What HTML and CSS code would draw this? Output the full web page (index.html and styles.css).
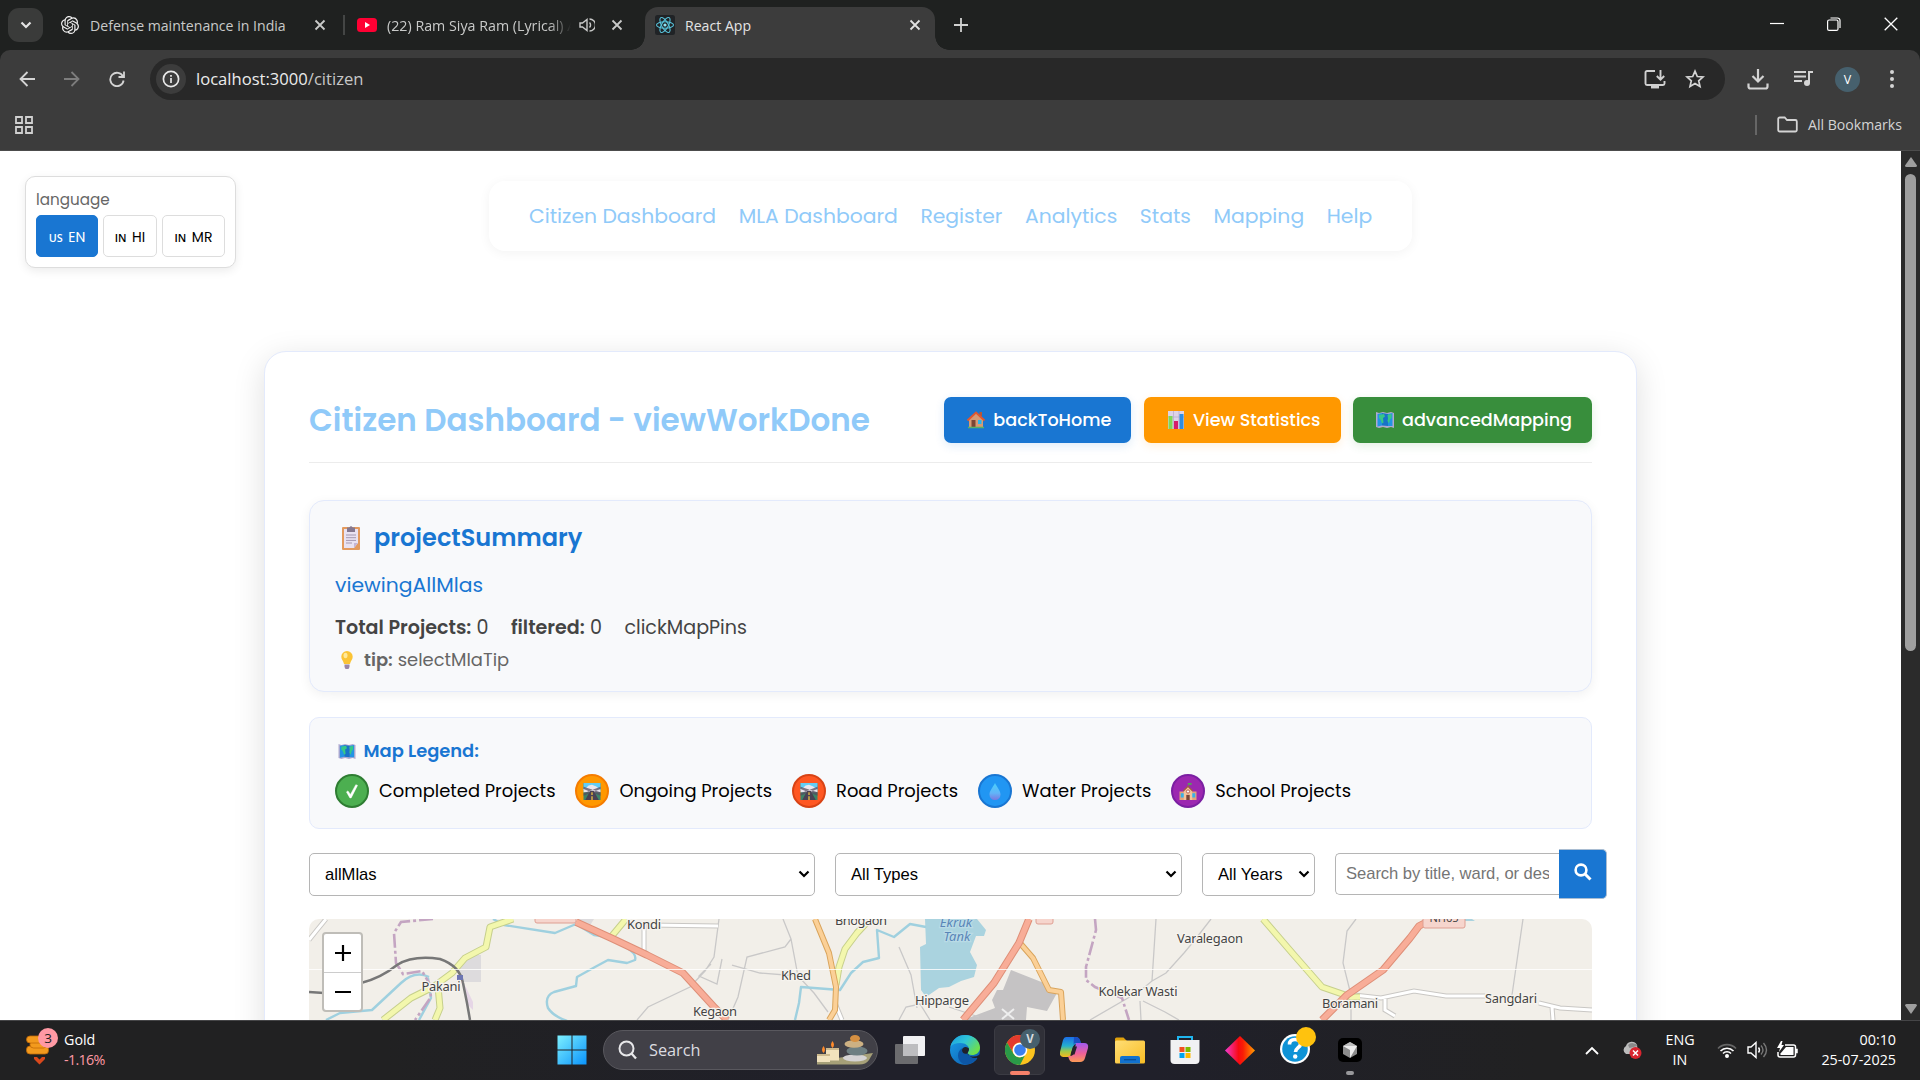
FILE: index.html
```
<!DOCTYPE html>
<html lang="en">
<head>
<meta charset="utf-8">
<title>React App</title>
<link rel="stylesheet" href="styles.css">
</head>
<body>
<svg class="defs" aria-hidden="true">
  <defs>
    <linearGradient id="g-win" x1="0" y1="0" x2="1" y2="1"><stop offset="0" stop-color="#7df0ff"/><stop offset="1" stop-color="#0a93fb"/></linearGradient>
    <linearGradient id="g-edge" x1="0" y1="0" x2="1" y2=".6"><stop offset="0" stop-color="#1a9be0"/><stop offset=".5" stop-color="#2fc5d8"/><stop offset="1" stop-color="#6fe04a"/></linearGradient>
    <linearGradient id="g-edge2" x1="0" y1="0" x2="1" y2="1"><stop offset="0" stop-color="#1aa0ea"/><stop offset="1" stop-color="#0c56a8"/></linearGradient>
    <linearGradient id="g-cop1" x1="0" y1="0" x2="0" y2="1"><stop offset="0" stop-color="#1b6de8"/><stop offset=".45" stop-color="#25b0cf"/><stop offset=".7" stop-color="#9bc94b"/><stop offset="1" stop-color="#f5b81e"/></linearGradient>
    <linearGradient id="g-cop2" x1="0" y1="0" x2="0" y2="1"><stop offset="0" stop-color="#a05af0"/><stop offset=".55" stop-color="#ee6099"/><stop offset="1" stop-color="#fb9a56"/></linearGradient>
    <linearGradient id="g-fold" x1="0" y1="0" x2="1" y2="1"><stop offset="0" stop-color="#ffde76"/><stop offset="1" stop-color="#f9bd24"/></linearGradient>
    <linearGradient id="g-dia"><stop offset="0" stop-color="#f23ad2"/><stop offset=".45" stop-color="#f80a12"/><stop offset=".6" stop-color="#fa1d05"/><stop offset="1" stop-color="#ff9d00"/></linearGradient>
    <linearGradient id="g-drop" x1="0" y1="0" x2="0" y2="1"><stop offset="0" stop-color="#4ad0fb"/><stop offset=".6" stop-color="#62b4f8"/><stop offset="1" stop-color="#7a78e0"/></linearGradient>
    <symbol id="i-close" viewBox="0 0 12 12"><path d="M1.500 1.500l9 9M10.500 1.500l-9 9" stroke="currentColor" stroke-width="1.800" fill="none"/></symbol>
    <symbol id="i-chev" viewBox="0 0 12 12"><path d="M1.500 3.500L6 8l4.500-4.500" stroke="currentColor" stroke-width="2.200" fill="none"/></symbol>
    <symbol id="i-map" viewBox="0 0 20 18"><path d="M1 1l3 1 4-1 4 1 4-1 3 1v15l-3-1-4 1-4-1-4 1-3-1z" fill="#b0a9d0"/><path d="M2.500 3L7 2v12.500l-4.500 1zM13 3l4.500-1v13L13 15z" fill="#2294e4"/><path d="M7 2l6 1v12l-6-.5z" fill="#1873c8"/><path d="M4 4l5-1 1 2.500-2 1.500.5 4.500-1.500 1-1.500-4L4 7zM12.500 4l4-1v4l-1.500 1.500-1 4-1.500-2.500.5-2.500z" fill="#37c887"/></symbol>
    <symbol id="i-road" viewBox="0 0 20 20"><path d="M0 0h20v20H0z" fill="#3c8367"/><path d="M0 0h20v8H0z" fill="#62cdf6"/><path d="M0 7l3-1 3-3 4-1 5 2 5 4v3H0z" fill="#e9e6ee"/><path d="M8 9h4l6 11H2z" fill="#4a4153"/><path d="M0 7l20 8v-4L0 4.500zM20 7L0 15v-3l20-7.500z" fill="#554c60" fill-opacity=".75"/><path d="M8.500 10h3L17 20H3z" fill="#4a4153"/><path d="M10 11v3M10 15.500V20" stroke="#f2c33c" stroke-width="1.500"/></symbol>
  </defs>
</svg>

<div class="browser">
  <header class="tabstrip">
    <span class="tab-search"><svg width="12" height="12"><use href="#i-chev"/></svg></span>
    <div class="tab tab-first">
      <svg class="fav" viewBox="0 0 24 24" fill="#f0f0f0"><path d="M22.2819 9.8211a5.9847 5.9847 0 0 0-.5157-4.9108 6.0462 6.0462 0 0 0-6.5098-2.9A6.0651 6.0651 0 0 0 4.9807 4.1818a5.9847 5.9847 0 0 0-3.9977 2.9 6.0462 6.0462 0 0 0 .7427 7.0966 5.98 5.98 0 0 0 .511 4.9107 6.051 6.051 0 0 0 6.5146 2.9001A5.9847 5.9847 0 0 0 13.2599 24a6.0557 6.0557 0 0 0 5.7718-4.2058 5.9894 5.9894 0 0 0 3.9977-2.9001 6.0557 6.0557 0 0 0-.7475-7.0729zm-9.022 12.6081a4.4755 4.4755 0 0 1-2.8764-1.0408l.1419-.0804 4.7783-2.7582a.7948.7948 0 0 0 .3927-.6813v-6.7369l2.02 1.1686a.071.071 0 0 1 .038.052v5.5826a4.504 4.504 0 0 1-4.4945 4.4944zm-9.6607-4.1254a4.4708 4.4708 0 0 1-.5346-3.0137l.142.0852 4.783 2.7582a.7712.7712 0 0 0 .7806 0l5.8428-3.3685v2.3324a.0804.0804 0 0 1-.0332.0615L9.74 19.9502a4.4992 4.4992 0 0 1-6.1408-1.6464zM2.3408 7.8956a4.485 4.485 0 0 1 2.3655-1.9728V11.6a.7664.7664 0 0 0 .3879.6765l5.8144 3.3543-2.0201 1.1685a.0757.0757 0 0 1-.071 0l-4.8303-2.7865A4.504 4.504 0 0 1 2.3408 7.872zm16.5963 3.8558L13.1038 8.364 15.1192 7.2a.0757.0757 0 0 1 .071 0l4.8303 2.7913a4.4944 4.4944 0 0 1-.6765 8.1042v-5.6772a.79.79 0 0 0-.407-.667zm2.0107-3.0231l-.142-.0852-4.7735-2.7818a.7759.7759 0 0 0-.7854 0L9.409 9.2297V6.8974a.0662.0662 0 0 1 .0284-.0615l4.8303-2.7866a4.4992 4.4992 0 0 1 6.6802 4.66zM8.3065 12.863l-2.02-1.1638a.0804.0804 0 0 1-.038-.0567V6.0742a4.4992 4.4992 0 0 1 7.3757-3.4537l-.142.0805L8.704 5.459a.7948.7948 0 0 0-.3927.6813zm1.0976-2.3654l2.602-1.4998 2.6069 1.4998v2.9994l-2.5974 1.4997-2.6067-1.4997Z"/></svg>
      <span class="tab-title">Defense maintenance in India</span>
      <svg class="x" width="12" height="12"><use href="#i-close"/></svg>
    </div>
    <i class="tab-sep"></i>
    <div class="tab tab-second">
      <svg class="yt" viewBox="0 0 20 14"><rect width="20" height="14" rx="3.500" fill="#f03"/><path d="M8 4l5 3-5 3z" fill="#fff"/></svg>
      <span class="tab-title fade">(22) Ram Siya Ram (Lyrical) A</span>
      <svg class="spk" viewBox="0 0 16 14" fill="none" stroke="#c9cac9" stroke-width="1.400"><path d="M1 5h2.500L8 1.500v11L3.500 9H1z"/><path d="M10.500 4.500a3.500 3.500 0 0 1 0 5M10.500 1a6 6 0 0 1 0 12"/></svg>
      <svg class="x" width="12" height="12"><use href="#i-close"/></svg>
    </div>
    <div class="tab active">
      <svg class="react" viewBox="0 0 20 20"><rect width="20" height="20" rx="2.500" fill="#202326"/><g fill="none" stroke="#58c4dc" stroke-width="1.100"><ellipse cx="10" cy="10" rx="8.500" ry="3.300"/><ellipse cx="10" cy="10" rx="8.500" ry="3.300" transform="rotate(60 10 10)"/><ellipse cx="10" cy="10" rx="8.500" ry="3.300" transform="rotate(120 10 10)"/></g><circle cx="10" cy="10" r="1.600" fill="#8be4f5"/></svg>
      <span class="tab-title">React App</span>
      <svg class="x" width="12" height="12"><use href="#i-close"/></svg>
    </div>
    <svg class="plus" viewBox="0 0 14 14"><path d="M7 0v14M0 7h14" stroke="#d0d1d0" stroke-width="1.800"/></svg>
    <div class="win-controls">
      <svg width="14" height="14"><path d="M0 6.500h14" stroke="#fff" stroke-width="1.200"/></svg>
      <svg width="14" height="14" fill="none" stroke="#fff" stroke-width="1.200"><rect x=".6" y="3" width="10.400" height="10.400" rx="1.500"/><path d="M3.500 1h7a2.500 2.500 0 0 1 2.500 2.500v7.500"/></svg>
      <svg width="14" height="14"><path d="M.7.7l12.600 12.600M13.300.7L.7 13.300" stroke="#fff" stroke-width="1.300"/></svg>
    </div>
  </header>

  <div class="toolbar">
    <svg class="nav-ic" viewBox="0 0 16 16"><path d="M8.500 1L1.500 8l7 7M1.500 8H16" fill="none" stroke="#d4d4d4" stroke-width="1.800"/></svg>
    <svg class="nav-ic" viewBox="0 0 16 16"><path d="M7.500 1l7 7-7 7M14.500 8H0" fill="none" stroke="#7d7d7d" stroke-width="1.800"/></svg>
    <svg class="nav-ic" viewBox="0 0 16 16"><path d="M14 5.500A6.700 6.700 0 1 0 14.600 9.500M15 .5v5.500H9.500" fill="none" stroke="#d4d4d4" stroke-width="1.800"/></svg>
    <div class="omnibox">
      <span class="info"><svg width="18" height="18" fill="none" stroke="#e8e8e8"><circle cx="9" cy="9" r="7.600" stroke-width="1.700"/><path d="M9 8v5M9 5v1.700" stroke-width="1.700"/></svg></span>
      <span class="url">localhost:3000<span>/citizen</span></span>
      <svg class="inst" viewBox="0 0 22 20" fill="none" stroke="#d0d0d0" stroke-width="1.900"><path d="M11 2H3a1.500 1.500 0 0 0-1.500 1.500v11A1.500 1.500 0 0 0 3 16h16a1.500 1.500 0 0 0 1.500-1.500V12"/><path d="M16.500 1v9M12.800 7l3.700 3.700L20.200 7"/><path d="M7 18.200h8" stroke-width="2.500"/></svg>
      <svg class="star" viewBox="0 0 20 20"><path d="M10 2.200l2.300 5.300 5.700.5-4.300 3.800 1.300 5.600-5-3-5 3 1.300-5.600L2 8l5.700-.5z" fill="none" stroke="#d4d4d4" stroke-width="1.700"/></svg>
    </div>
    <div class="tool-icons">
      <svg width="22" height="22" fill="none" stroke="#d4d4d4" stroke-width="2.200"><path d="M11 1v12M5.500 8L11 13.500 16.500 8"/><path d="M1.500 15.500v3a2 2 0 0 0 2 2h15a2 2 0 0 0 2-2v-3"/></svg>
      <svg width="22" height="20" viewBox="0 0 22 20"><path d="M1 3h12M1 7.500h12M1 12h8" stroke="#d4d4d4" stroke-width="2"/><circle cx="14" cy="14" r="3" fill="#d4d4d4"/><path d="M16 14V3h4" stroke="#d4d4d4" stroke-width="2" fill="none"/></svg>
      <span class="avatar">V</span>
      <svg class="dots" width="6" height="20"><circle cx="3" cy="3" r="2" fill="#d4d4d4"/><circle cx="3" cy="10" r="2" fill="#d4d4d4"/><circle cx="3" cy="17" r="2" fill="#d4d4d4"/></svg>
    </div>
  </div>

  <div class="bookmarks">
    <svg width="18" height="18" fill="none" stroke="#d0d0d0" stroke-width="1.800"><path d="M1 1h6v6H1zM11 1h6v6h-6zM1 11h6v6H1zM11 11h6v6h-6z"/></svg>
    <div class="all-bm"><i></i><svg width="21" height="17"><path d="M1.200 3a1.500 1.500 0 0 1 1.500-1.500h5l2.300 2.500h8.300a1.500 1.500 0 0 1 1.500 1.500v8.500a1.500 1.500 0 0 1-1.500 1.500H2.700a1.500 1.500 0 0 1-1.500-1.500z" fill="none" stroke="#d4d4d4" stroke-width="1.800"/></svg><span>All Bookmarks</span></div>
  </div>

  <div class="viewport">
    <div class="page">
      <div class="lang">
        <div class="lang-label">language</div>
        <div class="lang-row">
          <button class="on"><small>US</small>EN</button><button><small>IN</small>HI</button><button><small>IN</small>MR</button>
        </div>
      </div>

      <nav class="topnav"><a>Citizen Dashboard</a><a>MLA Dashboard</a><a>Register</a><a>Analytics</a><a>Stats</a><a>Mapping</a><a>Help</a></nav>

      <main class="card">
        <div class="head">
          <h1>Citizen Dashboard - viewWorkDone</h1>
          <div class="actions">
            <button class="btn blue"><svg viewBox="0 0 20 18"><path d="M13.500 1h2.500v4h-2.500z" fill="#b5573a"/><path d="M3 8l7-6 7 6v9H3z" fill="#d89a74"/><path d="M5.500 9h4v8h-4z" fill="#7b4636"/><path d="M12 9h3.500v4H12z" fill="#28b6ee"/><path d="M1.500 9.500L10 1.500l8.500 8" fill="none" stroke="#e2572e" stroke-width="2"/><path d="M2 16.500h16" stroke="#58b368" stroke-width="1.500"/></svg>backToHome</button>
            <button class="btn orange"><svg viewBox="0 0 20 18"><path d="M2 0h16v18H2z" fill="#ddd3e6"/><path d="M2 6h16M7.500 0v18M13 0v18" stroke="#b6a8c8" stroke-width=".7"/><path d="M2.500 5h4v13h-4z" fill="#7ed957"/><path d="M8 10h4v8H8z" fill="#d51e6a"/><path d="M13.500 3h4v15h-4z" fill="#2f8de0"/></svg>View Statistics</button>
            <button class="btn green"><svg><use href="#i-map"/></svg>advancedMapping</button>
          </div>
        </div>

        <section class="summary">
          <h2><svg viewBox="0 0 18 24"><rect y="1" width="18" height="23" rx="1" fill="#e39a5e"/><path d="M2 3h14v14l-4 5H2z" fill="#e9e2f2"/><path d="M16 17h-4v5z" fill="#c5b6d6"/><path d="M5 1.500h2L9 0l2 1.500h2V6H5z" fill="#85788f"/><path d="M4 9h10M4 11.700h10M4 14.400h10M4 17h6" stroke="#a498b0" stroke-width="1"/></svg>projectSummary</h2>
          <p class="viewing">viewingAllMlas</p>
          <p class="totals"><span><b>Total Projects:</b> 0</span><span><b>filtered:</b> 0</span><span>clickMapPins</span></p>
          <p class="tip"><svg viewBox="0 0 12 18"><path d="M6 0a5.700 5.700 0 0 1 5.700 5.700c0 3-2.200 4-2.700 7.300H3C2.500 9.700.3 8.700.3 5.700A5.700 5.700 0 0 1 6 0z" fill="#fbc436"/><ellipse cx="4.500" cy="4.500" rx="2" ry="2.800" fill="#ffe99a"/><path d="M3.500 13.500h5v2.500L7.500 18h-3l-1-2z" fill="#9a86a8"/></svg><b>tip:</b> selectMlaTip</p>
        </section>

        <section class="legend">
          <h3><svg><use href="#i-map"/></svg>Map Legend:</h3>
          <div class="legend-row">
            <span><i class="dot done"><svg viewBox="0 0 20 20"><path d="M3.500 10.500l1.700-1.200 3 4.200L14.500 2l2 .8L9 17.500H7.500z" fill="#fff" stroke="#fff" stroke-width=".6"/></svg></i>Completed Projects</span>
            <span><i class="dot ongoing"><svg><use href="#i-road"/></svg></i>Ongoing Projects</span>
            <span><i class="dot road"><svg><use href="#i-road"/></svg></i>Road Projects</span>
            <span><i class="dot water"><svg viewBox="0 0 20 20"><path d="M10 0c2 4.500 6.500 9 6.500 13.500a6.500 6.500 0 0 1-13 0C3.500 9 8 4.500 10 0z" fill="url(#g-drop)"/></svg></i>Water Projects</span>
            <span><i class="dot school"><svg viewBox="0 0 20 20"><path d="M0 10h20v10H0z" fill="#e3a27c"/><path d="M1.500 12h4v5h-4zM14.500 12h4v5h-4z" fill="#38b1e8"/><path d="M5 9l5-5 5 5v11H5z" fill="#f3c39c"/><path d="M4.500 9.500L10 4l5.500 5.500" fill="none" stroke="#a35a40" stroke-width="1.500"/><path d="M8 14h4v6H8z" fill="#7a4638"/><circle cx="10" cy="10" r="1.900" fill="#fff" stroke="#b04e3c"/><path d="M10 4V0h4v2h-4" fill="#43b558" stroke="#6b8f59" stroke-width=".6"/></svg></i>School Projects</span>
          </div>
        </section>

        <div class="filters">
          <div class="select s1"><span>allMlas</span><svg width="12" height="12"><use href="#i-chev"/></svg></div>
          <div class="select s2"><span>All Types</span><svg width="12" height="12"><use href="#i-chev"/></svg></div>
          <div class="select s3"><span>All Years</span><svg width="12" height="12"><use href="#i-chev"/></svg></div>
          <div class="search"><div class="field"><span>Search by title, ward, or description</span></div><button><svg width="18" height="18"><circle cx="7" cy="7" r="5.400" fill="none" stroke="#fff" stroke-width="2.600"/><path d="M11 11l5.500 5.500" stroke="#fff" stroke-width="3"/></svg></button></div>
        </div>

        <div class="map">
          <svg class="tiles" viewBox="0 0 1283 101" width="1283" height="101" fill="none">
            <rect width="1283" height="101" fill="#f2efe9"/>
            <path d="M155 36h17v27h-17l-6-10z" fill="#dddbdd"/>
            <path d="M150 54l14 29v8l-5-5z" fill="#e6d6e6"/>
            <path d="M702 51l33 13 13 10-10 18-20-4-1 13h-63l32-12-3-8 5-10h6z" fill="#c5c3c4"/>
            <path d="M616 0h52l9 11-2 6h-8l-6 16 7 13-3 12-13 4-12 6-10 1-13 9-5-7-1-43 6-3z" fill="#aad3df"/>
            <path d="M1153 2l7-4 6 4h-12z" fill="#aad3df"/>
            <path d="M267 0h18l-5 8z" fill="#dddbdd"/>
            <g stroke="#c9c8c8" stroke-width="1.300">
              <path d="M410 0l-5 38-9 14-15 16-42 20-11 13M413 40l-5 25-18-8 12-12M474 0l8 20 7 37 16 17 14 19M482 20l-6 8-38 10-9 40-10 23M423 46l28 8 38 3M590 28l12 28 6 33"/>
              <path d="M590 101l7-13 14-3 10 16M640 88l30 10"/>
              <path d="M847 0l-4 62-12 10-50 29M902 0l-17 22-10 12-18 20-14 8M831 82l1 19M834 82l22 11 14 8M1047 0l-9 12-4 32 8 32v25M1214 0l-11 76"/>
            </g>
            <path d="M339 6l70 1M335 5v28M1045 76l27 3 33-7 32 5h39M1230 84l21 5 32 2M1243 88l1 13M1076 80v11l10 6M526 84l7 17M0 21l8-10 9-11" stroke="#c9c7c4" stroke-width="5"/>
            <path d="M339 6l70 1M335 5v28M1045 76l27 3 33-7 32 5h39M1230 84l21 5 32 2M1243 88l1 13M1076 80v11l10 6M526 84l7 17M0 21l8-10 9-11" stroke="#fff" stroke-width="3"/>
            <g stroke="#9fd0df" stroke-width="2.400" stroke-linejoin="round">
              <path d="M184 0l11 6 51 8 21-9 18 11 14 2 19 11q10 6 8 12l-8 3-19-3-13 7-18 10-1 9-22 6q-10 4-6 16 5 8 19 13"/>
              <path d="M120 58q-14-7-28 6L63 91l-32 3-14 7M119 59l3 20-12 22M486 101l4-17 2-16 39 3 11-17 12-11 16-4-2-28 17 7 16-13 16 3"/>
            </g>
            <path d="M124 0L92 3l-7 11 2 30 7 11 19-3 7 12 2 14-16 23M786 0l1 11-10 37v13l9 7 27 11 7 22" stroke="#c4a5c2" stroke-width="2.600" stroke-dasharray="14 3 3 3"/>
            <g stroke-linejoin="round">
              <path d="M204 0l-23 8-4 20-21 11-13 15-19 14-22 11-28 22M129 67l2 22-5 12M317 0l-15 18M561 0l-13 14-12 16-6 18-3 18M954 0l31 36 28 32 29 10h9" stroke="#c6cf8c" stroke-width="7"/>
              <path d="M204 0l-23 8-4 20-21 11-13 15-19 14-22 11-28 22M129 67l2 22-5 12M317 0l-15 18M561 0l-13 14-12 16-6 18-3 18M954 0l31 36 28 32 29 10h9" stroke="#f3f7ad" stroke-width="5"/>
              <path d="M506 0l14 34 7 34-1 23-6 10M711 24l13 15 16 32 12 2 2 28" stroke="#d9a45c" stroke-width="6"/>
              <path d="M506 0l14 34 7 34-1 23-6 10M711 24l13 15 16 32 12 2 2 28" stroke="#fbd097" stroke-width="4"/>
              <path d="M267 3l35 16 36 17 36 18 32 35 12 12M720 0l-10 24-25 40-31 37M1013 101l25-25 36-25 27-32 9-12 12-6" stroke="#de8f78" stroke-width="7.500"/>
              <path d="M267 3l35 16 36 17 36 18 32 35 12 12M720 0l-10 24-25 40-31 37M1013 101l25-25 36-25 27-32 9-12 12-6" stroke="#f8ad98" stroke-width="5.500"/>
            </g>
            <path d="M0 73l15 1 37-10q20-5 36-18 16-10 43-6 20 7 23 24l4 20 3 17" stroke="#777" stroke-width="2.500"/>
            <path d="M148 56h6v5h-6z" fill="#6d76b3"/>
            <g fill="#f6d5cd" stroke="#de9f92"><rect x="226" y="-10" width="41" height="14" rx="2"/><rect x="727" y="-10" width="17" height="15" rx="2"/><rect x="1114" y="-10" width="42" height="19" rx="2"/></g>
            <path d="M693 90l12 10M705 90l-12 10" stroke="#eee" stroke-width="2"/>
            <path d="M0 50.500h1283" stroke="#fff" stroke-opacity=".8"/>
            <g class="labels">
              <text x="335" y="10" textLength="34">Kondi</text><text x="552" y="6" textLength="52">Bhogaon</text><text x="487" y="61" textLength="30">Khed</text><text x="406" y="97" textLength="44">Kegaon</text><text x="132" y="72" textLength="39">Pakani</text><text x="633" y="86" textLength="54">Hipparge</text><text x="901" y="24" textLength="66">Varalegaon</text><text x="829" y="77" textLength="79">Kolekar Wasti</text><text x="1041" y="89" textLength="56">Boramani</text><text x="1202" y="84" textLength="52">Sangdari</text><text class="ref" x="1135" y="3">NH65</text>
              <g class="water-l"><text x="647" y="8">Ekruk</text><text x="648" y="22">Tank</text></g>
            </g>
          </svg>
          <div class="zoom"><span><svg width="16" height="16"><path d="M8 0v16M0 8h16" stroke="#000" stroke-width="2.200"/></svg></span><span><svg width="16" height="16"><path d="M0 8h16" stroke="#000" stroke-width="2.200"/></svg></span></div>
        </div>
      </main>
    </div>
    <div class="scrollbar"><svg width="12" height="10"><path d="M6 0l6 8.500q0 1.500-1.500 1.500h-9Q0 10 0 8.500z" fill="#9f9f9f"/></svg><i></i><svg class="down" width="12" height="10"><path d="M6 10l6-8.500Q12 0 10.500 0h-9Q0 0 0 1.500z" fill="#9f9f9f"/></svg></div>
  </div>

  <footer class="taskbar">
    <div class="widget">
      <svg width="34" height="36"><g fill="#f39a1d" stroke="#c26a08" stroke-width=".8"><rect x="1.500" y="18" width="22" height="8" rx="3.500"/><rect x="5" y="13" width="17" height="7" rx="3.500"/><rect x="1.500" y="8" width="20" height="7" rx="3.500"/></g><path d="M9 29h3l2.500 2.500L17 29h3v2l-5.500 5.500L9 31z" fill="#d9481c"/><circle cx="23" cy="10" r="10" fill="#ff99a4"/><text x="23" y="15" text-anchor="middle" class="w-badge">3</text></svg>
      <div><div>Gold</div><div class="neg">-1.16%</div></div>
    </div>
    <div class="dock">
      <span class="slot"><svg width="30" height="30"><path d="M.5.500h14v14H.5zM15.500.500h14v14h-14zM.5 15.500h14v14H.5zM15.500 15.500h14v14h-14z" fill="url(#g-win)"/></svg></span>
      <div class="tsearch"><svg width="19" height="20"><circle cx="8.500" cy="8.500" r="7" fill="#55545c" stroke="#e8e8ea" stroke-width="2"/><path d="M13.500 13.500l4.500 5" stroke="#e8e8ea" stroke-width="2.300"/></svg><span>Search</span>
        <svg class="stones" width="58" height="32"><path d="M1 27l20-3 36-5-4 7q-3 4.500-10 4.500H1z" fill="#a6a078"/><path d="M1 20h13v8H1zM10 14h13v12.500H10z" fill="#f1e2bd"/><path d="M1 20h13v2H1zM10 14h13v2H10z" fill="#cdb98d"/><path d="M7.500 12q3 4 0 7-3-3 0-7zM16.500 7q3 4 0 7-3-3 0-7z" fill="#ff8a2a"/><ellipse cx="39" cy="24" rx="12" ry="3.500" fill="#d5d3d4"/><ellipse cx="41" cy="17" rx="10.500" ry="4.500" fill="#6e7f82"/><ellipse cx="38" cy="10" rx="9.500" ry="3.800" fill="#cdb183"/><ellipse cx="39" cy="4.500" rx="5" ry="3.500" fill="#d69042"/></svg>
      </div>
      <span class="slot"><svg width="30" height="28"><rect x="8" width="22" height="20" rx="1" fill="#f1f1f3"/><rect y="8" width="23" height="20" rx="1" fill="#737376" fill-opacity=".9"/><path d="M8 8h15v12H8z" fill="#bdbdc0"/></svg></span>
      <span class="slot"><svg width="30" height="30" viewBox="0 0 30 30"><circle cx="15" cy="15" r="15" fill="url(#g-edge2)"/><path d="M.3 12C2 4.500 8 0 15 0c9 0 15 6 15 12.500 0 5-4 7.500-8 7.500-3 0-4.500-1-4.300-2.200.3-1.200 1.300-1.500 1.300-3.800 0-3-3.500-6-8.500-6C5.500 8 2 9.500.3 12z" fill="url(#g-edge)"/><path d="M17.500 17.500c-.8 2 1.500 4.500 5 4.500 2 0 4.500-.5 5.500-1-2.500 5.500-7.500 8.500-13 8.500-4-1-7-5-7-9 0-3.500 2-6 4.500-7.500-1 3 1 4.500 5 4.500z" fill="#0d56a6"/><path d="M19 14c0 2.500-1.300 3-1.400 4.300-3 1.500-5.600-.5-5.600-3 0-2 1.500-3.300 3.500-3.300 2 0 3.500 1 3.500 2z" fill="#20202a"/><path d="M17.500 18q-.5 2.500 4.500 3.500 4 .5 7-1.500l1 2-2 2-1.200-1.200q-6 1.500-9.300-4.800z" fill="#20202a"/></svg></span>
      <span class="slot tile"><svg width="30" height="30" viewBox="0 0 30 30"><circle cx="15" cy="15" r="15" fill="#fcc31e"/><path d="M2 7.500A15 15 0 0 1 28 7.500H15a7.500 7.500 0 0 0-6.500 11.300z" fill="#e33b2e"/><path d="M2 7.500l6.500 11.300A7.500 7.500 0 0 0 15 22.500l5-2.300L15 30A15 15 0 0 1 2 7.500z" fill="#2a9a48"/><circle cx="15" cy="15" r="7.300" fill="#fff"/><circle cx="15" cy="15" r="5.800" fill="#3b7fee"/></svg><b class="v">V</b><i class="run"></i></span>
      <span class="slot"><svg width="30" height="28" viewBox="0 0 30 28"><path d="M6 1h10q3 0 4 4l1 3h-5q-2 0-3 3l-3 10H3q-4-1-3-5L3 4q1-3 3-3z" fill="url(#g-cop1)"/><path d="M16 7h8q5 0 4 5l-3 10q-1 4-5 4h-8q-2 0-3-3l-1-3h3q2 0 3-3z" fill="url(#g-cop2)"/><path d="M14 1h2q4 0 5 6h-5q-2 0-2.500 2z" fill="#1a4fc4"/><path d="M13 10.500h4l-2.500 8h-4z" fill="#24222c"/></svg></span>
      <span class="slot"><svg width="30" height="27"><path d="M0 2a1.500 1.500 0 0 1 1.500-1.500h7L12 4h6v6H0z" fill="#e0a10c"/><rect y="3.500" width="30" height="23" rx="1.500" fill="url(#g-fold)"/><path d="M5 26.500V21q0-2 2-2h16q2 0 2 2v5.500z" fill="#1272cf"/><path d="M9 22.700h12" stroke="#0a4e97" stroke-width="1.300"/></svg></span>
      <span class="slot"><svg width="30" height="30"><path d="M8 6V2h14v4" fill="none" stroke="#1fb5ef" stroke-width="2"/><path d="M.5 5h29v20q0 4-4 4h-21q-4 0-4-4z" fill="#f1f1f3"/><path d="M9.500 12h5v5h-5z" fill="#f25022"/><path d="M15.500 12h5v5h-5z" fill="#7fba00"/><path d="M9.500 18h5v5h-5z" fill="#00a4ef"/><path d="M15.500 18h5v5h-5z" fill="#ffb900"/></svg></span>
      <span class="slot"><svg width="30" height="29"><path d="M15 0l15 14.500L15 29 0 14.500z" fill="url(#g-dia)"/></svg></span>
      <span class="slot"><svg class="help" width="36" height="38"><circle cx="15" cy="22" r="15" fill="#fff"/><circle cx="15" cy="22" r="12.800" fill="#0f93d6"/><path d="M9.500 17.500q0-5 5.500-5t5.500 4.500c0 3.500-5 4-5 8" fill="none" stroke="#fff" stroke-width="3.600"/><circle cx="15.200" cy="29.500" r="2.200" fill="#fff"/><circle cx="26" cy="10" r="10" fill="#ffc20e"/></svg></span>
      <span class="slot"><svg width="24" height="24"><rect width="24" height="24" rx="5" fill="#000"/><path d="M12 4l7 4v8l-7 4-7-4V8z" fill="#8c8c8c"/><path d="M5 8l14 0-7 12v-8z" fill="#ececec"/><path d="M12 4l7 4H5z" fill="#bdbdbd"/></svg><i class="run idle"></i></span>
    </div>
    <div class="tray">
      <svg class="t-up" width="14" height="9"><path d="M1 8l6-6 6 6" fill="none" stroke="#fff" stroke-width="1.800"/></svg>
      <svg class="t-cloud" width="21" height="18"><path d="M5 13a4.500 4.500 0 0 1 0-8 6 6 0 0 1 11-1l1 9z" fill="#bcbcbc"/><path d="M7 4a6 6 0 0 1 9.500 1l-8 2z" fill="#8a8a8a"/><circle cx="14.500" cy="12" r="6" fill="#d9252f"/><path d="M12 9.500l5 5M17 9.500l-5 5" stroke="#fff" stroke-width="1.500"/></svg>
      <div class="t-lang">ENG<br>IN</div>
      <svg class="t-wifi" width="20" height="17" fill="none" stroke="#fff" stroke-width="1.600"><path d="M1 6.500a12.500 12.500 0 0 1 18 0" stroke="#666"/><path d="M3.500 9a9 9 0 0 1 13 0M6 11.500a5.500 5.500 0 0 1 8 0"/><circle cx="10" cy="14" r="1.200" fill="#fff"/></svg>
      <svg class="t-spk" width="21" height="18" fill="none" stroke="#fff" stroke-width="1.400"><path d="M1 6h3l5-4.500v15L4 12H1z"/><path d="M11.500 6.500q2 2.500 0 5"/><path d="M14 4.500q4 4.500 0 9M16.500 2q6 7 0 14" stroke="#777"/></svg>
      <svg class="t-bat" width="21" height="18"><path d="M8 4h8.500a2 2 0 0 1 2 2v8a2 2 0 0 1-2 2H3a2 2 0 0 1-2-2v-3M18.500 8.500h1.500v3h-1.500" fill="none" stroke="#fff" stroke-width="1.500"/><path d="M9 6h7.500v8H3.500v-1.500z" fill="#fff"/><path d="M4 0L0 7h3l-1 4 5-7H4.500l1-4z" fill="#fff"/></svg>
      <div class="t-clock">00:10<br>25-07-2025</div>
    </div>
  </footer>
</div>
</body>
</html>
```
FILE: styles.css
```
* { box-sizing: border-box; }
body { margin: 0; font-family: "Open Sans", "Noto Sans", sans-serif; overflow: hidden; background: #1f2120; }
svg { display: block; flex: none; }
h1, h2, h3, p { margin: 0; }
button { font-family: inherit; cursor: pointer; }
.defs { position: absolute; width: 0; height: 0; }
.browser { width: 1920px; height: 1080px; display: flex; flex-direction: column; }

/* Tabs */
.tabstrip { height: 50px; display: flex; align-items: flex-start; background: #1f2120; color: #c9cac9; flex: none; padding-left: 8px; font-size: 14.100px; }
.tab-search { width: 35px; height: 34px; margin-top: 8px; border-radius: 11px; background: #3a3b3a; color: #e4e4e4; display: flex; align-items: center; justify-content: center; }
.tab { display: flex; align-items: center; height: 34px; margin-top: 8px; white-space: nowrap; }
.tab-first { width: 300px; padding: 0 17px 0 18px; }
.tab .x { margin-left: auto; }
.fav { width: 18px; height: 18px; margin-right: 11px; }
.tab-sep { width: 2px; height: 20px; background: #444645; margin-top: 15px; }
.tab-second { width: 300px; padding: 0 22px 0 12px; }
.yt { width: 20px; height: 14px; margin-right: 10px; }
.fade { width: 184px; overflow: hidden; font-size: 14.250px; -webkit-mask: linear-gradient(90deg, #000 88%, transparent); mask: linear-gradient(90deg, #000 88%, transparent); }
.spk { width: 16px; height: 14px; margin-left: 8px; }
.active { position: relative; width: 290px; height: 43px; margin-top: 7px; padding: 0 14px 7px 10px; background: #3c3c3c; border-radius: 13px 13px 0 0; color: #e3e3e3; }
.active::before, .active::after { content: ""; position: absolute; bottom: 0; width: 14px; height: 14px; }
.active::before { left: -14px; background: radial-gradient(circle at 0 0, transparent 13.500px, #3c3c3c 14px); }
.active::after { right: -14px; background: radial-gradient(circle at 100% 0, transparent 13.500px, #3c3c3c 14px); }
.react { width: 20px; height: 20px; margin-right: 10px; }
.plus { width: 14px; height: 14px; margin: 18px 0 0 19px; }
.win-controls { margin: 17px 22px 0 auto; display: flex; gap: 43px; }

/* Toolbar */
.toolbar { height: 58px; flex: none; display: flex; align-items: center; background: #3c3c3c; border-radius: 10px 10px 0 0; padding-left: 19px; }
.nav-ic { width: 16px; height: 16px; margin: 0 29px 1px 0; }
.omnibox { width: 1575px; height: 42px; margin-left: -4px; border-radius: 21px; background: #282828; display: flex; align-items: center; padding-left: 6px; }
.info { width: 30px; height: 30px; border-radius: 50%; background: #3c3c3c; display: flex; align-items: center; justify-content: center; }
.url { margin-left: 10px; padding-bottom: 1px; font-size: 16.600px; color: #ececec; }
.url span { color: #c7c7c7; }
.inst { width: 22px; height: 20px; margin-left: auto; }
.star { width: 20px; height: 20px; margin: 0 20px 0 19px; }
.tool-icons { display: flex; align-items: center; margin-left: 22px; }
.tool-icons svg + svg { margin-left: 24px; }
.avatar { width: 25px; height: 25px; border-radius: 50%; background: #46606d; color: #fff; font-size: 12.500px; display: flex; align-items: center; justify-content: center; margin: 0 29px 0 20px; }
.bookmarks { height: 43px; flex: none; background: #3c3c3c; border-bottom: 1px solid #4c4c4c; display: flex; justify-content: space-between; align-items: center; padding: 0 18px 9px 15px; }
.all-bm { display: flex; align-items: center; color: #d4d4d4; font-size: 14.100px; }
.all-bm i { width: 2px; height: 20px; background: #666; margin-right: 20px; }
.all-bm svg { margin-right: 10px; }

/* Page */
.viewport { height: 869px; flex: none; display: flex; background: #fff; overflow: hidden; }
.page { width: 1901px; position: relative; font-family: Poppins, "Open Sans", sans-serif; overflow: hidden; }
.scrollbar { width: 19px; background: #2b2b2b; display: flex; flex-direction: column; align-items: center; padding: 6px 0; }
.scrollbar i { width: 11px; height: 477px; border-radius: 6px; background: #9f9f9f; margin-top: 7px; }
.scrollbar .down { margin-top: auto; }
.lang { position: absolute; left: 25px; top: 25px; width: 211px; height: 92px; padding: 10px; border: 1px solid #ddd; border-radius: 10px; box-shadow: 0 3px 10px rgba(0,0,0,.08); background: #fff; }
.lang-label { font-size: 15.200px; line-height: 25px; color: #666; }
.lang-row { display: flex; gap: 5px; margin-top: 3px; }
.lang-row button { height: 42px; padding: 2px 0 0; width: 54px; border: 1px solid #ddd; border-radius: 5px; background: #fff; color: #000; font: 14px Poppins, sans-serif; }
.lang-row button:first-child { width: 62px; }
.lang-row button:last-child { width: 63px; }
.lang-row small { font: 600 10.800px "Open Sans", sans-serif; margin-right: 5.500px; }
.lang-row .on { background: #1976d2; border-color: #1976d2; color: #fff; }
.topnav { width: 923px; height: 70px; margin: 30px 0 0 489px; border-radius: 16px; box-shadow: 0 2px 12px rgba(0,0,0,.05); background: #fff; display: flex; align-items: center; padding-left: 40px; gap: 22.600px; font-size: 20.350px; color: #90caf9; white-space: nowrap; }
.card { margin: 100px 0 0 264px; width: 1373px; height: 760px; padding: 45px 44px 0; border: 1px solid #e3eafc; border-radius: 22px; background: #fff; box-shadow: 0 8px 32px rgba(0,0,0,.13); }
.head { display: flex; justify-content: space-between; align-items: flex-start; height: 66px; border-bottom: 1px solid #ececec; }
.head h1 { font-size: 31.050px; line-height: 46px; font-weight: 600; color: #90caf9; }
.actions { display: flex; gap: 12.500px; }
.btn { height: 46px; border: 0; border-radius: 7px; color: #fff; font: 500 17.600px Poppins, sans-serif; display: flex; align-items: center; padding: 0 20px 0 22px; white-space: nowrap; }
.btn svg { width: 20px; height: 18px; margin-right: 7px; }
.blue { background: #1976d2; box-shadow: 0 3px 10px rgba(25,118,210,.14); }
.orange { background: #ff9800; box-shadow: 0 3px 10px rgba(255,152,0,.14); }
.green { background: #388e3c; box-shadow: 0 3px 10px rgba(56,142,60,.14); }
.summary { height: 192px; margin-top: 37px; padding: 19px 25px; background: #f8f9fb; border: 1px solid #e3eafc; border-radius: 15px; box-shadow: 0 3px 12px rgba(0,0,0,.06); }
.summary h2 { display: flex; align-items: center; font-size: 24.050px; line-height: 36px; font-weight: 600; color: #1976d2; }
.summary h2 svg { width: 18px; height: 24px; margin: 0 14px 0 7px; }
.summary b { font-weight: 600; }
.viewing { font-size: 20.350px; line-height: 30px; margin-top: 14px; color: #1976d2; }
.totals { display: flex; gap: 22.500px; font-size: 19.100px; line-height: 28px; margin-top: 14px; color: #444; }
.tip { display: flex; align-items: center; gap: 5px; font-size: 17.900px; line-height: 26px; margin-top: 5px; color: #666; }
.tip svg { width: 12px; height: 18px; margin: 0 6px 0 6px; }
.legend { height: 112px; margin-top: 25px; padding: 19px 25px; background: #f8f9fb; border: 1px solid #e3eafc; border-radius: 10px; }
.legend h3 { display: flex; align-items: center; font-size: 17.850px; line-height: 28px; font-weight: 600; color: #1976d2; }
.legend h3 svg { width: 20px; height: 17px; margin: 0 6.500px 0 2px; }
.legend-row { display: flex; gap: 20px; margin-top: 9px; font-size: 17.900px; line-height: 34px; white-space: nowrap; }
.legend-row span { display: flex; align-items: center; gap: 10px; }
.dot { width: 34px; height: 34px; border-radius: 50%; border: 2px solid; display: flex; align-items: center; justify-content: center; }
.dot svg { width: 18px; height: 17px; }
.done { background: #4caf50; border-color: #2e7d32; }
.ongoing { background: #ff9800; border-color: #f57c00; }
.road { background: #ff5722; border-color: #d84315; }
.water { background: #2196f3; border-color: #1976d2; }
.school { background: #9c27b0; border-color: #7b1fa2; }
.filters { display: flex; align-items: center; gap: 20px; height: 50px; margin: 20px -15px 0 0; font: 16.600px "Liberation Sans", Arial, sans-serif; }
.select { flex: none; height: 43px; border: 1px solid #b5b5b5; border-radius: 5px; padding: 0 4px 0 15px; display: flex; align-items: center; justify-content: space-between; color: #000; }
.select span { padding-top: 1px; }
.s1 { width: 506px; }
.s2 { width: 347px; }
.s3 { width: 113px; }
.search { display: flex; align-items: center; flex: none; }
.field { width: 224px; height: 42px; border: 1px solid #b5b5b5; border-right: 0; border-radius: 5px 0 0 5px; padding: 0 10px; display: flex; align-items: center; color: #757575; }
.field span { overflow: hidden; white-space: nowrap; letter-spacing: -.050px; }
.search button { width: 48px; height: 50px; border: 1px solid #a9bdd2; border-left: 0; border-radius: 0 5px 5px 0; background: #1976d2; padding: 0 0 5px 15px; }
.map { position: relative; margin-top: 20px; height: 101px; border-radius: 10px 10px 0 0; overflow: hidden; }
.labels text { font: 13px "Noto Sans", sans-serif; fill: #444; stroke: #f6f3ee; stroke-width: 2.500px; paint-order: stroke; text-anchor: middle; }
.labels .water-l text { font-style: italic; fill: #5a86b8; stroke: #b9dbe6; }
.labels .ref { font-size: 11px; stroke: none; }
.zoom { position: absolute; left: 13px; top: 13px; width: 41px; height: 80px; border: 2px solid #bfbdb8; border-radius: 4px; background: #fff; }
.zoom span { height: 38px; display: flex; align-items: center; justify-content: center; }
.zoom span + span { border-top: 1px solid #ccc; }

/* Taskbar */
.taskbar { height: 60px; flex: none; background: linear-gradient(90deg, #212122 20%, #20202a 45%, #20202a 60%, #212122 80%); border-top: 1px solid #454547; display: flex; color: #fff; font-size: 14.300px; line-height: 20.500px; }
.taskbar > div { flex: none; }
.widget { width: 544px; display: flex; padding: 7px 0 0 25px; }
.widget svg { overflow: visible; margin-top: 0; }
.widget > div { margin: 2px 0 0 5px; }
.widget .neg { color: #ff99a4; letter-spacing: -.700px; margin-top: -1px; }
.w-badge { font-size: 13.500px; fill: #222; }
.dock { width: 1041px; display: flex; align-items: center; padding-bottom: 1px; }
.slot { width: 55px; height: 50px; position: relative; display: flex; align-items: center; justify-content: center; }
.tsearch { width: 275px; height: 40px; margin: 0 4px; border-radius: 20px; background: #414047; border: 1px solid #59585e; display: flex; align-items: center; padding-left: 14px; font-size: 16.300px; color: #dcdce0; }
.tsearch span { margin-left: 12px; }
.stones { margin-left: auto; margin-right: 3px; }
.tile::before { content: ""; position: absolute; inset: 0 2px; border-radius: 6px; border: 1px solid #3b3b43; background: #303038; z-index: -1; }
.tile { isolation: isolate; }
.v { position: absolute; left: 28px; top: 4px; width: 20px; height: 20px; border-radius: 50%; background: #46606d; color: #d8dde0; font-size: 11.500px; line-height: 20px; text-align: center; }
.run { position: absolute; bottom: 0; left: 18px; width: 20px; height: 4px; border-radius: 2px; background: #f5806a; }
.idle { left: 24px; width: 8px; background: #98989b; }
.help { margin: -8px 0 0 6px; }
.tray { display: flex; align-items: center; width: 311px; padding-bottom: 1px; }
.t-cloud { margin-left: 22px; }
.t-lang { width: 50px; margin-left: 13px; text-align: center; }
.t-wifi { margin-left: 12px; }
.t-spk { margin-left: 10px; }
.t-bat { margin-left: 9px; }
.t-clock { margin-left: auto; text-align: right; }
```
